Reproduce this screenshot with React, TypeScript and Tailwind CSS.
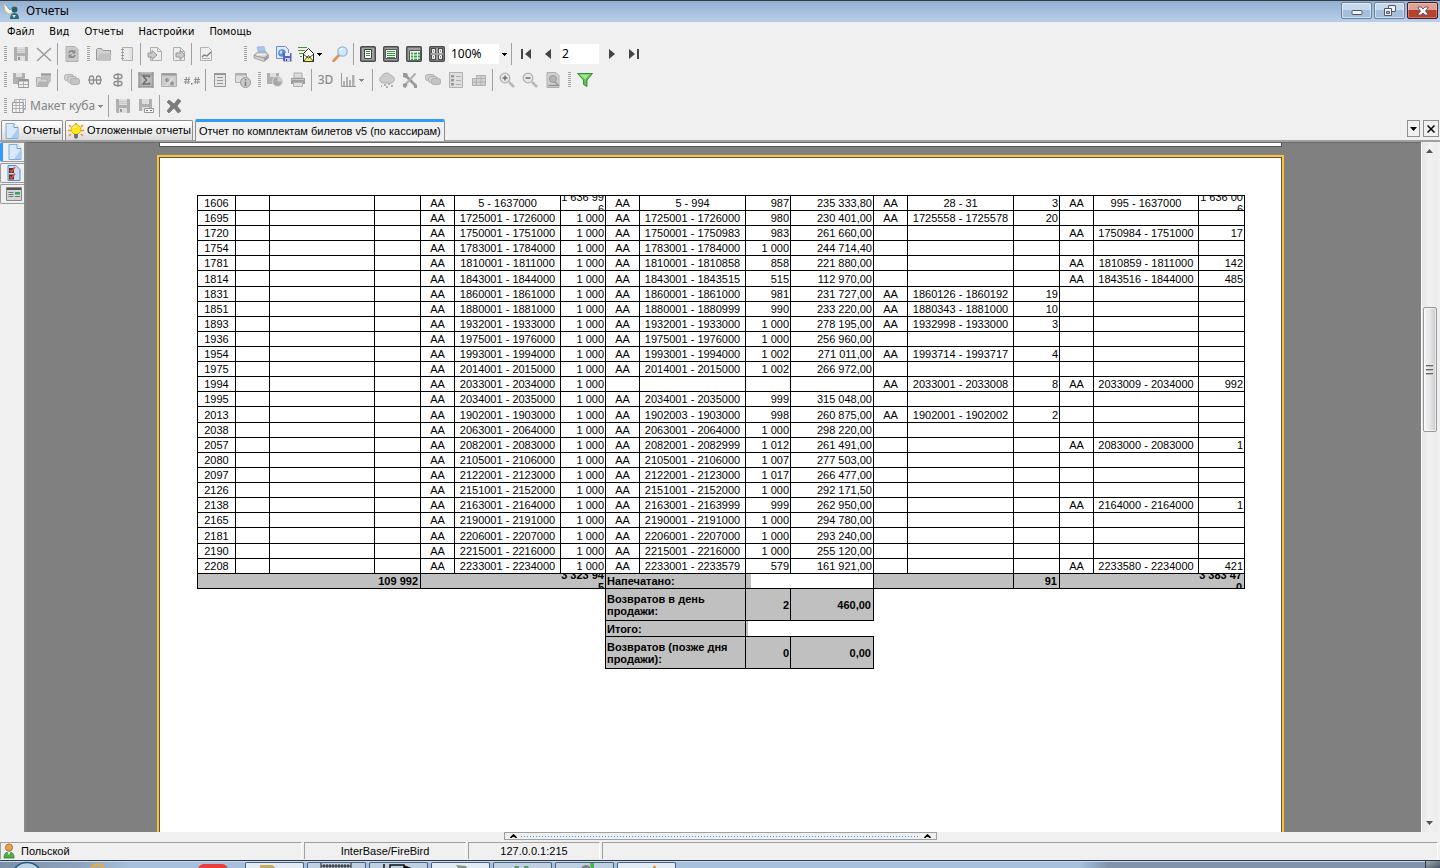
import type { ReactNode } from 'react'

type Row = string[]

// number | series, range, count | series, range, count, sum | series, range, count | series, range, count
const ROWS: Row[] = [
  ['1606', 'AA', '5 - 1637000', '1 636 99|6', 'AA', '5 - 994', '987', '235 333,80', 'AA', '28 - 31', '3', 'AA', '995 - 1637000', '1 636 00|6'],
  ['1695', 'AA', '1725001 - 1726000', '1 000', 'AA', '1725001 - 1726000', '980', '230 401,00', 'AA', '1725558 - 1725578', '20', '', '', ''],
  ['1720', 'AA', '1750001 - 1751000', '1 000', 'AA', '1750001 - 1750983', '983', '261 660,00', '', '', '', 'AA', '1750984 - 1751000', '17'],
  ['1754', 'AA', '1783001 - 1784000', '1 000', 'AA', '1783001 - 1784000', '1 000', '244 714,40', '', '', '', '', '', ''],
  ['1781', 'AA', '1810001 - 1811000', '1 000', 'AA', '1810001 - 1810858', '858', '221 880,00', '', '', '', 'AA', '1810859 - 1811000', '142'],
  ['1814', 'AA', '1843001 - 1844000', '1 000', 'AA', '1843001 - 1843515', '515', '112 970,00', '', '', '', 'AA', '1843516 - 1844000', '485'],
  ['1831', 'AA', '1860001 - 1861000', '1 000', 'AA', '1860001 - 1861000', '981', '231 727,00', 'AA', '1860126 - 1860192', '19', '', '', ''],
  ['1851', 'AA', '1880001 - 1881000', '1 000', 'AA', '1880001 - 1880999', '990', '233 220,00', 'AA', '1880343 - 1881000', '10', '', '', ''],
  ['1893', 'AA', '1932001 - 1933000', '1 000', 'AA', '1932001 - 1933000', '1 000', '278 195,00', 'AA', '1932998 - 1933000', '3', '', '', ''],
  ['1936', 'AA', '1975001 - 1976000', '1 000', 'AA', '1975001 - 1976000', '1 000', '256 960,00', '', '', '', '', '', ''],
  ['1954', 'AA', '1993001 - 1994000', '1 000', 'AA', '1993001 - 1994000', '1 002', '271 011,00', 'AA', '1993714 - 1993717', '4', '', '', ''],
  ['1975', 'AA', '2014001 - 2015000', '1 000', 'AA', '2014001 - 2015000', '1 002', '266 972,00', '', '', '', '', '', ''],
  ['1994', 'AA', '2033001 - 2034000', '1 000', '', '', '', '', 'AA', '2033001 - 2033008', '8', 'AA', '2033009 - 2034000', '992'],
  ['1995', 'AA', '2034001 - 2035000', '1 000', 'AA', '2034001 - 2035000', '999', '315 048,00', '', '', '', '', '', ''],
  ['2013', 'AA', '1902001 - 1903000', '1 000', 'AA', '1902003 - 1903000', '998', '260 875,00', 'AA', '1902001 - 1902002', '2', '', '', ''],
  ['2038', 'AA', '2063001 - 2064000', '1 000', 'AA', '2063001 - 2064000', '1 000', '298 220,00', '', '', '', '', '', ''],
  ['2057', 'AA', '2082001 - 2083000', '1 000', 'AA', '2082001 - 2082999', '1 012', '261 491,00', '', '', '', 'AA', '2083000 - 2083000', '1'],
  ['2080', 'AA', '2105001 - 2106000', '1 000', 'AA', '2105001 - 2106000', '1 007', '277 503,00', '', '', '', '', '', ''],
  ['2097', 'AA', '2122001 - 2123000', '1 000', 'AA', '2122001 - 2123000', '1 017', '266 477,00', '', '', '', '', '', ''],
  ['2126', 'AA', '2151001 - 2152000', '1 000', 'AA', '2151001 - 2152000', '1 000', '292 171,50', '', '', '', '', '', ''],
  ['2138', 'AA', '2163001 - 2164000', '1 000', 'AA', '2163001 - 2163999', '999', '262 950,00', '', '', '', 'AA', '2164000 - 2164000', '1'],
  ['2165', 'AA', '2190001 - 2191000', '1 000', 'AA', '2190001 - 2191000', '1 000', '294 780,00', '', '', '', '', '', ''],
  ['2181', 'AA', '2206001 - 2207000', '1 000', 'AA', '2206001 - 2207000', '1 000', '293 240,00', '', '', '', '', '', ''],
  ['2190', 'AA', '2215001 - 2216000', '1 000', 'AA', '2215001 - 2216000', '1 000', '255 120,00', '', '', '', '', '', ''],
  ['2208', 'AA', '2233001 - 2234000', '1 000', 'AA', '2233001 - 2233579', '579', '161 921,00', '', '', '', 'AA', '2233580 - 2234000', '421'],
]

const COLS = [38, 34, 105, 46, 34, 106, 45, 34, 106, 45, 83, 34, 106, 46, 34, 105, 46]

const TALL = ['1814', '2013', '2181']

const ALIGN = ['c', 'c', 'c', 'r', 'c', 'c', 'r', 'r', 'c', 'c', 'r', 'c', 'c', 'r']

const G = '#b0b0b0'
const L = '#dedede'
const D = '#989898'

function Svg({ children, w = 16 }: { children: ReactNode; w?: number }) {
  return (
    <svg width={w} height={16} viewBox={`0 0 ${w} 16`} fill="none" className="shrink-0" aria-hidden="true">
      {children}
    </svg>
  )
}

/* ---------- toolbar icons ---------- */

const SaveIcon = () => (
  <Svg>
    <path d="M1 1h14v14H2l-1-1z" fill={G} />
    <path d="M4 1h8v6H4z" fill={L} />
    <path d="M4 3.500h8M4 5.500h8" stroke="#c8c8c8" />
    <path d="M4 10h8v5H4z" fill={L} />
    <path d="M5 11h2v3H5z" fill={D} />
  </Svg>
)

const CrossIcon = () => (
  <Svg>
    <path d="M1 2l14 13M15 2L1 15" stroke={D} strokeWidth="1.4" />
  </Svg>
)

const RefreshDocIcon = () => (
  <Svg>
    <path d="M2 .5h9l3 3v12H2z" fill="#cacaca" stroke={G} />
    <path d="M5 7a3.2 3.2 0 0 1 5-1.500M11 9a3.200 3.200 0 0 1-5 1.500" stroke="#8a8a8a" strokeWidth="1.800" />
    <path d="M11.500 3.500v4h-4zM4.500 12.500v-4h4z" fill="#8a8a8a" />
  </Svg>
)

const FolderIcon = () => (
  <Svg>
    <path d="M.5 14V3.500l1-1h4l1.500 2h7.500V14z" fill="#d2d2d2" stroke={D} />
    <path d="M1 14L3 7.500h12.500L14.500 14z" fill="#c2c2c2" />
  </Svg>
)

const BookIcon = () => (
  <Svg>
    <path d="M3.500 1.500h10v13h-10z" fill="#ececec" stroke={G} />
    <path d="M11.500 2v12" stroke={L} strokeWidth="2" />
    <path d="M2 3.500h3M2 6.500h3M2 9.500h3M2 12.500h3" stroke={D} />
  </Svg>
)

const DocArrowIcon = ({ out = false }: { out?: boolean }) => (
  <Svg>
    <path d="M3.500 1.500h7l4 4v9h-11z" fill="#ededed" stroke={G} />
    <path d="M10.500 1.500v4h4" stroke={G} />
    <path d={out ? 'M6 7h4V4.500L15 9l-5 4.500V11H6z' : 'M1 7h4V4.500L10 9l-5 4.500V11H1z'} fill="#cacaca" stroke={D} />
  </Svg>
)

const ChartDocIcon = () => (
  <Svg>
    <path d="M2.500 1.500h8l3 3v10h-11z" fill="#efefef" stroke={G} />
    <path d="M4 11l2-2 3 1 4-4" stroke="#808080" strokeWidth="1.500" />
    <path d="M4 12.500h8" stroke={G} />
  </Svg>
)

const PrinterColorIcon = () => (
  <Svg>
    <path d="M4 1l7-.5 2 7H6z" fill="#a9c5f5" stroke="#8fa8dc" strokeWidth=".6" />
    <path d="M1 9l4-3h8l2.500 3v3L11 15.500 1 12z" fill="#d3d1ce" stroke="#9a9794" strokeWidth=".8" />
    <path d="M1 9.500l10 2.500 4.500-3" stroke="#9a9794" />
    <path d="M4 8h8l1 1.500H3z" fill="#eee" />
    <path d="M11 12.500v2.500l4-3V10z" fill="#9a96a2" />
  </Svg>
)

const WebSaveIcon = () => (
  <Svg>
    <path d="M.5.500h9l3 3v9H.5z" fill="#dfe9fa" stroke="#6f8fce" />
    <circle cx="6" cy="7" r="3.800" fill="#5b87dc" />
    <path d="M4 5c2-1 3 0 2 2S4 8 3.500 7zM7 8l2-1-1 3z" fill="#bfe0c2" />
    <path d="M7 7h8.500v8.500H8l-1-1z" fill="#5563b8" />
    <path d="M9 7h5v3H9z" fill="#e8ecff" />
    <path d="M9 12h5v3.500H9z" fill="#c6cdf0" />
    <path d="M10 13h1v2h-1z" fill="#333b7b" />
  </Svg>
)

const MailIcon = () => (
  <Svg>
    <path d="M0 1.500h9M0 4.500h7M1 7.500h4M2 10.500h2" stroke="#3f9b2f" strokeWidth="1.200" />
    <path d="M5.500 15.500V7.500l5-5 5 5v8z" fill="#fff" stroke="#222" />
    <path d="M5.500 15.500l5-6 5 6z" fill="#f7ef64" stroke="#222" strokeWidth=".8" />
    <path d="M5.500 8.500l5 3.500 5-3.500" stroke="#222" strokeWidth=".8" />
  </Svg>
)

const MagnifierIcon = () => (
  <Svg>
    <path d="M1.500 15l5-5.500" stroke="#d79a5c" strokeWidth="2.800" strokeLinecap="round" />
    <circle cx="10.500" cy="5.500" r="4.700" fill="#cfeafd" stroke="#8fb4da" strokeWidth="1.200" />
    <path d="M8 4.500a3 3 0 0 1 3-2" stroke="#fff" strokeWidth="1.500" />
  </Svg>
)

const PageModeIcon = ({ mode }: { mode: number }) => (
  <Svg>
    <rect x=".75" y=".75" width="14.500" height="14.500" rx="1" fill="#a0a0a0" stroke="#4b4b4b" strokeWidth="1.500" />
    {mode === 0 && (
      <>
        <path d="M4.500 3.500h7v9h-7z" fill="#fff" stroke="#444" />
        <path d="M6 5.500h4M6 7.500h4M6 9.500h4" stroke="#2f9a3b" />
      </>
    )}
    {mode === 1 && (
      <>
        <path d="M2.500 3.500h11v9h-11z" fill="#fff" stroke="#555" />
        <path d="M4 5.500h8M4 7.500h8M4 9.500h8M4 11.500h8" stroke="#2f9a3b" />
      </>
    )}
    {mode === 2 && (
      <>
        <path d="M3.500 4.500h11v10h-11z" fill="#fff" stroke="#555" />
        <path d="M5 7.500h2M8 7.500h3M12 7.500h2M5 10.500h2M8 10.500h3M12 10.500h2M5 13.500h2M8 13.500h3M12 13.500h2" stroke="#3aa346" strokeWidth="2" />
      </>
    )}
    {mode === 3 && (
      <>
        <path d="M2 2h5v5H2zM9 2h5v5H9zM2 9h5v5H2zM9 9h5v5H9z" fill="#4b4b4b" />
        <path d="M3.500 3.500h2v3h-2zM10.500 3.500h2v3h-2zM3.500 9.500h2v3h-2zM10.500 9.500h2v3h-2z" fill="#8c8c8c" stroke="#fff" />
      </>
    )}
  </Svg>
)

const NavIcon = ({ d }: { d: string }) => (
  <Svg>
    <path d={d} fill="#444" />
  </Svg>
)

const SaveGridIcon = () => (
  <Svg>
    <path d="M0 1h12v11H0z" fill={G} />
    <path d="M3 1h6v4H3z" fill={L} />
    <path d="M5.500 7.500h10v8h-10z" fill="#eee" stroke={D} />
    <path d="M5.500 8.500h10" stroke={D} strokeWidth="2" />
    <path d="M6 12.500h9M10.500 9v6" stroke={G} />
  </Svg>
)

const FoldersIcon = () => (
  <Svg>
    <path d="M5 1h10v9H5z" fill="#c0c0c0" />
    <path d="M5 2.500h10" stroke={D} strokeWidth="1.500" />
    <path d="M.5 14.500v-9h4l1 1.500h6v7.500z" fill="#d2d2d2" stroke={G} />
    <path d="M1 14.500l2-5h11l-2.500 5z" fill="#b4b4b4" />
  </Svg>
)

const StackIcon = () => (
  <Svg>
    <rect x=".5" y="2.500" width="9" height="6" rx="2" fill="#d0d0d0" stroke={G} />
    <rect x="3.500" y="4.500" width="9" height="6" rx="2" fill="#d0d0d0" stroke={G} />
    <rect x="6.500" y="6.500" width="9" height="6" rx="2" fill="#c4c4c4" stroke={G} />
  </Svg>
)

const LinksIcon = ({ vertical = false }: { vertical?: boolean }) => (
  <Svg>
    <g transform={vertical ? 'rotate(90 8 8)' : undefined} stroke="#8c8c8c" strokeWidth="1.300">
      <rect x="2.500" y="4" width="4" height="8" rx="2" />
      <rect x="9.500" y="4" width="4" height="8" rx="2" />
      <path d="M1 8h14" />
    </g>
  </Svg>
)

const SigmaIcon = () => (
  <Svg>
    <path d="M0 0h16v16H0z" fill="#bcbcbc" />
    <path d="M0 2.500h16M0 14.500h16M1.500 0v16M14.500 0v16" stroke="#9c9c9c" strokeWidth="1.500" />
    <path d="M11.500 5.500V4H5l3.500 4L5 12h6.500v-1.500" stroke="#6c6c6c" strokeWidth="1.500" />
  </Svg>
)

const PercentGridIcon = () => (
  <Svg>
    <path d="M.5 1.500h15v13H.5z" fill="#cecece" stroke={G} />
    <path d="M1 2.500h14" stroke={D} strokeWidth="2" />
    <circle cx="6" cy="8" r="2" fill={D} />
    <circle cx="11" cy="11.500" r="2" fill={D} />
    <path d="M12 6l-7 8" stroke="#eee" />
  </Svg>
)

const HashIcon = () => (
  <Svg>
    <path d="M2.500 5l-1 7M5 5l-1 7M0 7.500h6M0 10h6M12 5l-1 7M14.500 5l-1 7M10 7.500h6M10 10h6" stroke="#8f8f8f" />
    <path d="M7 11h1.500v1.500H7z" fill="#777" />
  </Svg>
)

const ListIcon = () => (
  <Svg>
    <path d="M2.500 1.500h11v13h-11z" fill="#e6e6e6" stroke={D} />
    <path d="M2.500 2h11" stroke={D} strokeWidth="2" />
    <path d="M5 5.500h6M5 8.500h6M5 11.500h6" stroke={D} />
  </Svg>
)

const InfoIcon = () => (
  <Svg>
    <path d="M.5 1.500h11v9H.5z" fill="#dedede" stroke={G} />
    <path d="M.5 2.500h11" stroke={G} strokeWidth="2" />
    <circle cx="10.500" cy="10.500" r="5" fill="#cacaca" stroke={D} />
    <path d="M10.500 9.500V14M10.500 7v1.500" stroke="#808080" strokeWidth="1.600" />
  </Svg>
)

const SavePieIcon = () => (
  <Svg>
    <path d="M0 1h12v11H0z" fill={G} />
    <path d="M3 1h6v4H3z" fill={L} />
    <circle cx="10.500" cy="9.500" r="5" fill="#a8a8a8" stroke="#dcdcdc" />
    <path d="M10.500 9.500V4.500a5 5 0 0 1 5 5z" fill="#cdcdcd" />
  </Svg>
)

const PrinterIcon = () => (
  <Svg>
    <path d="M4 1h8v5H4z" fill="#ddd" stroke={G} />
    <path d="M1 6h14v6H1z" fill="#a0a0a0" />
    <path d="M2 7.500h12" stroke="#c8c8c8" />
    <path d="M3.500 10.500h9v4h-9z" fill="#e0e0e0" stroke={G} />
  </Svg>
)

const BarsIcon = () => (
  <Svg>
    <path d="M1.500 1v13.500H16" stroke={D} />
    <path d="M3 9h2v5H3zM6 5h2v9H6zM9 8h2v6H9zM12 3h2.500v11H12z" fill={G} />
  </Svg>
)

const WeatherIcon = () => (
  <Svg>
    <path d="M1 9a4 4 0 0 1 2-5 5 5 0 0 1 9-.5A4 4 0 0 1 15 9l-2 2H3z" fill="#cccccc" stroke={G} />
    <path d="M5 12h2v2H5zM9 11h2v2H9zM7 14h2v2H7zM12 13h2v2h-2zM2 13h1v2H2z" fill={G} />
  </Svg>
)

const ToolsIcon = () => (
  <Svg>
    <path d="M3 3l11 11" stroke="#9a9a9a" strokeWidth="2.600" />
    <path d="M13.500 1.500L3 13" stroke="#b0b0b0" strokeWidth="2" />
    <path d="M1 1l4 0 1 3-2 2-3-1zM1 12l3-1 1.500 2-2 3-2.500-1zM12 11l3 2v3h-3z" fill="#9a9a9a" />
  </Svg>
)

const CheckListIcon = () => (
  <Svg>
    <path d="M1.500.500h13v15h-13z" fill="#dedede" stroke={G} />
    <path d="M3 3h3v2.500H3zM3 7h3v2.500H3zM3 11h3v2.500H3z" fill={D} />
    <path d="M8 4.500h5M8 8.500h5M8 12.500h5" stroke={G} />
  </Svg>
)

const SmallGridIcon = () => (
  <Svg>
    <path d="M1.500 6.500h13v7h-13zM5.500 3.500h9v3h-9z" fill="#d2d2d2" />
    <path d="M1.500 6.500h13v7h-13zM5.500 13V3.500h9V7M1.500 10h13M10 3.500v10" stroke={G} />
  </Svg>
)

const ZoomIcon = ({ plus = false }: { plus?: boolean }) => (
  <Svg>
    <circle cx="6" cy="6" r="4.800" fill="#e8e8e8" stroke={G} strokeWidth="1.300" />
    <path d={plus ? 'M3.500 6h5M6 3.500v5' : 'M3.500 6h5'} stroke="#707070" strokeWidth="1.500" />
    <path d="M10 10l5 5" stroke="#b8b8b8" strokeWidth="2.500" />
  </Svg>
)

const PreviewIcon = () => (
  <Svg>
    <path d="M2 .5h9l3 3v12H2z" fill="#d0d0d0" stroke={G} />
    <circle cx="8" cy="7" r="3.500" fill="#b4b4b4" stroke={D} />
    <path d="M10 10l4 4M3 13.500h10" stroke={D} strokeWidth="1.600" />
  </Svg>
)

const FunnelIcon = () => (
  <Svg>
    <path d="M.5 1.500h15L10 8v6.500l-3.500-2V8z" fill="#5cc24f" stroke="#389036" />
    <path d="M2.500 2.500h10L8 7.500z" fill="#a5e68f" />
  </Svg>
)

const CubeIcon = () => (
  <Svg>
    <path d="M3.500 1.500h11v10h-11z" fill="#f4f4f4" stroke={G} />
    <path d="M1.500 4.500h11v10h-11z" fill="#f4f4f4" stroke={D} />
    <path d="M1.500 7.500h13M1.500 10.500h13M5 2v12M8.500 2v12M12 2v12" stroke={G} />
  </Svg>
)

const SaveAsIcon = () => (
  <Svg>
    <path d="M1 1h13v12H1z" fill={G} />
    <path d="M4 1h7v5H4zM4 9h7v4H4z" fill={L} />
    <path d="M6.500 10.500h9v4h-9z" fill="#f5f5f5" stroke={D} />
    <path d="M8 12.500h2M12 12.500h2" stroke="#777" />
  </Svg>
)

const DeleteIcon = () => (
  <Svg>
    <path d="M3 2l5 4 4-5 3 2-4 5 4 5-3 2-4-5-5 5-2-2 4-5-4-4z" fill="#7c7c7c" stroke="#666" strokeWidth=".6" />
  </Svg>
)

const SheetIcon = () => (
  <Svg>
    <path d="M2 .5h8l4 4v11H2z" fill="#d8e9fc" stroke="#83abd9" />
    <path d="M7 15L13.500 6v9z" fill="#a7cbf3" />
    <path d="M10 .5v4h4" fill="#fff" stroke="#6d9cd6" />
  </Svg>
)

const BulbIcon = () => (
  <Svg>
    <path d="M8 0v2M1 2l2 2M15 2l-2 2M0 7.500h3M13 7.500h3M1 13l2-2M15 13l-2-2" stroke="#f0932b" strokeWidth="1.500" />
    <circle cx="8" cy="6.500" r="4.800" fill="#ffe818" stroke="#d9a400" strokeWidth=".8" />
    <path d="M5.500 5a3 3 0 0 1 2.500-2" stroke="#fffbc0" strokeWidth="1.400" />
    <path d="M6 11h4v3.500L8 16l-2-1.500z" fill="#6a6f78" />
  </Svg>
)

const AppIcon = () => (
  <Svg>
    <path d="M1 1l6 3 5-3-2 8-4 2-4-3z" fill="#f7f7ef" stroke="#e0b35a" strokeWidth=".8" />
    <path d="M3 2l4 5 4-5" fill="#7fc0ee" stroke="#5aa1dc" />
    <circle cx="11.500" cy="6.500" r="3" fill="#2f5b68" />
    <path d="M7 16c0-4 1.500-6 4.500-6s4.500 2 4.500 6z" fill="#2d6c74" />
    <path d="M9 12l2 3 2-3z" fill="#bfe3ef" />
  </Svg>
)

const UserIcon = () => (
  <Svg w={12}>
    <circle cx="6" cy="4.500" r="3.600" fill="#f0a04b" stroke="#9b6324" strokeWidth=".8" />
    <path d="M1 15c0-4 1.500-6 5-6s5 2 5 6z" fill="#4fae48" stroke="#2f7d2c" strokeWidth=".8" />
    <path d="M4.500 9L6 12l1.500-3z" fill="#fff" />
  </Svg>
)

/* ---------- toolbar pieces ---------- */

const Grip = ({ className = '' }: { className?: string }) => (
  <div className={`flex w-2 shrink-0 justify-center ${className}`}>
    <div className="h-4 w-[3px] bg-[repeating-linear-gradient(#a0a0a0_0_1px,#f4f4f4_1px_2px)]" />
  </div>
)

const Sep = () => (
  <div className="flex w-[5px] shrink-0 justify-center self-stretch">
    <div className="w-px bg-[#a0a0a0]" />
  </div>
)

function Tool({ label, children, menu = false, dark = false }: { label: string; children: ReactNode; menu?: boolean; dark?: boolean }) {
  return (
    <button type="button" aria-label={label} className={`flex h-[22px] shrink-0 items-center ${menu ? 'w-[33px] gap-[3px] pl-[3px]' : 'w-[23px] justify-center'}`}>
      {children}
      {menu && <Caret color={dark ? '#000' : '#8c8c8c'} />}
    </button>
  )
}

const Caret = ({ color = '#000' }: { color?: string }) => (
  <svg width="5" height="3" viewBox="0 0 5 3" className="shrink-0" aria-hidden="true" shapeRendering="crispEdges">
    <path d="M0 0h5v1H4v1H3v1H2V2H1V1H0z" fill={color} />
  </svg>
)

function TitleBar() {
  return (
    <header className="flex h-[22px] shrink-0 items-start border-t border-[#353a42] bg-linear-to-b from-[#93b0d2] to-[#b9d0ea] pl-[3px] pr-[2px]">
      <div className="flex h-[19px] grow items-center gap-[7px]">
        <AppIcon />
        <h1 className="font-['Noto_Sans'] text-xs leading-4">Отчеты</h1>
      </div>
      <div className="flex gap-[2px] pt-px">
        <button type="button" aria-label="Свернуть" className="flex h-[17px] w-[31px] items-center justify-center rounded-[2px] border border-[#6b829f] bg-linear-to-b from-[#c5d9ee] from-50% to-[#a4bfdd] to-50% inset-ring inset-ring-white/50">
          <svg width="12" height="8" viewBox="0 0 12 8" aria-hidden="true">
            <rect x="1" y="3.500" width="10" height="4" rx="1" fill="#f4f4f4" stroke="#535666" />
          </svg>
        </button>
        <button type="button" aria-label="Восстановить" className="flex h-[17px] w-[31px] items-center justify-center rounded-[2px] border border-[#6b829f] bg-linear-to-b from-[#c5d9ee] from-50% to-[#a4bfdd] to-50% inset-ring inset-ring-white/50">
          <svg width="12" height="11" viewBox="0 0 12 11" aria-hidden="true">
            <path d="M4.500.500h7v6h-7z" fill="#f4f4f4" stroke="#535666" />
            <path d="M.5 3.500h7v7h-7z" fill="#f4f4f4" stroke="#535666" />
            <path d="M2.500 6.500h3v2h-3z" fill="#b4cbe4" stroke="#535666" />
          </svg>
        </button>
        <button type="button" aria-label="Закрыть" className="flex h-[17px] w-[31px] items-center justify-center rounded-[2px] border border-[#4a1a22] bg-linear-to-b from-[#dfa095] from-50% to-[#b9402c] to-50% inset-ring inset-ring-white/30">
          <svg width="12" height="10" viewBox="0 0 12 10" aria-hidden="true">
            <path d="M1 1h3l2 2 2-2h3v1L8.500 5 11 8v1H8L6 7 4 9H1V8l2.500-3L1 2z" fill="#f6f6f6" stroke="#535666" strokeWidth=".9" />
          </svg>
        </button>
      </div>
    </header>
  )
}

function MenuBar() {
  return (
    <nav className="flex h-[21px] shrink-0 items-center gap-[15px] pl-[7px] font-['DejaVu_Sans_Condensed','DejaVu_Sans',sans-serif] text-[11px]">
      {['Файл', 'Вид', 'Отчеты', 'Настройки', 'Помощь'].map((m) => (
        <button type="button" key={m}>{m}</button>
      ))}
    </nav>
  )
}

function Toolbars() {
  return (
    <div className="flex shrink-0 flex-col gap-[4px]">
      <div className="flex h-[22px] items-center pl-px">
        <Grip />
        <Tool label="Сохранить"><SaveIcon /></Tool>
        <Tool label="Удалить"><CrossIcon /></Tool>
        <Sep />
        <Tool label="Обновить"><RefreshDocIcon /></Tool>
        <Grip className="ml-px" />
        <Tool label="Открыть"><FolderIcon /></Tool>
        <Tool label="Журнал"><BookIcon /></Tool>
        <Sep />
        <Tool label="Импорт"><DocArrowIcon /></Tool>
        <Tool label="Экспорт"><DocArrowIcon out /></Tool>
        <Sep />
        <Tool label="График"><ChartDocIcon /></Tool>
        <Grip className="ml-6" />
        <Tool label="Печать"><PrinterColorIcon /></Tool>
        <Tool label="Сохранить как веб-страницу"><WebSaveIcon /></Tool>
        <Tool label="Отправить" menu dark><MailIcon /></Tool>
        <Tool label="Найти"><MagnifierIcon /></Tool>
        <Sep />
        <Tool label="Страница целиком"><PageModeIcon mode={0} /></Tool>
        <Tool label="По ширине"><PageModeIcon mode={1} /></Tool>
        <Tool label="Реальный размер"><PageModeIcon mode={2} /></Tool>
        <Tool label="Несколько страниц"><PageModeIcon mode={3} /></Tool>
        <div className="relative ml-px flex h-[20px] w-[60px] bg-white">
          <select aria-label="Масштаб" defaultValue="100%" className="h-5 w-full appearance-none pl-[2px] font-['Noto_Sans'] text-xs leading-5 outline-none">
            <option>100%</option>
          </select>
          <div className="pointer-events-none absolute inset-y-0 right-0 flex w-[10px] items-center justify-center bg-[#f0f0f0]">
            <Caret />
          </div>
        </div>
        <Sep />
        <Tool label="Первая"><NavIcon d="M3 3h2v10H3zM13 3v10L7 8z" /></Tool>
        <Tool label="Предыдущая"><NavIcon d="M10 3v10L4 8z" /></Tool>
        <input aria-label="Номер страницы" defaultValue="2" className="h-[20px] w-[39px] bg-white pl-[2px] font-['Noto_Sans'] text-xs leading-5 outline-none" />
        <Tool label="Следующая"><NavIcon d="M6 3v10l6-5z" /></Tool>
        <Tool label="Последняя"><NavIcon d="M11 3h2v10h-2zM3 3v10l6-5z" /></Tool>
      </div>

      <div className="flex h-[22px] items-center pl-px">
        <Grip />
        <Tool label="Сохранить таблицу"><SaveGridIcon /></Tool>
        <Tool label="Открыть таблицу"><FoldersIcon /></Tool>
        <Sep />
        <Tool label="Слои"><StackIcon /></Tool>
        <Tool label="Связать по горизонтали"><LinksIcon /></Tool>
        <Tool label="Связать по вертикали"><LinksIcon vertical /></Tool>
        <Sep />
        <Tool label="Сумма"><SigmaIcon /></Tool>
        <Tool label="Проценты"><PercentGridIcon /></Tool>
        <Tool label="Формат"><HashIcon /></Tool>
        <Sep />
        <Tool label="Список"><ListIcon /></Tool>
        <Tool label="Сведения"><InfoIcon /></Tool>
        <Grip className="ml-px" />
        <Tool label="Сохранить диаграмму"><SavePieIcon /></Tool>
        <Tool label="Печать диаграммы"><PrinterIcon /></Tool>
        <Sep />
        <button type="button" className="h-[22px] w-[23px] shrink-0 font-['Noto_Sans'] text-xs font-medium text-[#8c8c8c]">3D</button>
        <Tool label="Тип диаграммы" menu><BarsIcon /></Tool>
        <Sep />
        <Tool label="Фон"><WeatherIcon /></Tool>
        <Tool label="Настройка"><ToolsIcon /></Tool>
        <Tool label="Серии"><StackIcon /></Tool>
        <Tool label="Легенда"><CheckListIcon /></Tool>
        <Tool label="Сетка"><SmallGridIcon /></Tool>
        <Sep />
        <Tool label="Увеличить"><ZoomIcon plus /></Tool>
        <Tool label="Уменьшить"><ZoomIcon /></Tool>
        <Tool label="Просмотр"><PreviewIcon /></Tool>
        <Grip className="ml-px" />
        <Tool label="Фильтр"><FunnelIcon /></Tool>
      </div>

      <div className="flex h-[22px] items-center pl-px">
        <Grip />
        <button type="button" className="flex h-[22px] items-center gap-[3px] pl-[2px] font-['Noto_Sans'] text-xs text-[#838383]">
          <CubeIcon />
          <span>Макет куба</span>
          <Caret color="#8c8c8c" />
        </button>
        <div className="ml-[3px] self-stretch flex">
          <Sep />
        </div>
        <Tool label="Сохранить макет"><SaveIcon /></Tool>
        <Tool label="Сохранить макет как"><SaveAsIcon /></Tool>
        <Sep />
        <Tool label="Удалить макет"><DeleteIcon /></Tool>
      </div>
    </div>
  )
}

function TabStrip() {
  const tab = 'flex h-5 items-center rounded-t-[2px] border border-b-0 border-[#8e8e8e] whitespace-nowrap'
  return (
    <div className="flex h-[25px] shrink-0 items-end border-b-2 border-[#a0a0a0] pl-px pr-px font-['Liberation_Sans',Arial,sans-serif] text-[11px]">
      <div className="flex grow items-end gap-[2px]" role="tablist">
        <button type="button" role="tab" className={`${tab} gap-[3px] bg-linear-to-b from-white to-[#dcdcdc] pl-[2px] pr-px`}>
          <SheetIcon />
          Отчеты
        </button>
        <button type="button" role="tab" className={`${tab} gap-[3px] bg-linear-to-b from-white to-[#dcdcdc] pl-[2px] pr-px`}>
          <BulbIcon />
          Отложенные отчеты
        </button>
        <button type="button" role="tab" aria-selected="true" className={`${tab} -mb-px h-[22px] border-t-3 border-t-[#3399ff] bg-[#f0f0f0] px-[3px]`}>
          Отчет по комплектам билетов v5 (по кассирам)
        </button>
      </div>
      <div className="flex gap-[3px] pb-[3px]">
        <button type="button" aria-label="Список вкладок" className="flex h-[17px] w-[13px] items-center justify-center border border-[#8e8e8e]">
          <svg width="7" height="4" viewBox="0 0 7 4" aria-hidden="true">
            <path d="M0 0h7L3.500 4z" fill="#000" />
          </svg>
        </button>
        <button type="button" aria-label="Закрыть вкладку" className="flex h-[17px] w-4 items-center justify-center border border-[#8e8e8e]">
          <svg width="8" height="8" viewBox="0 0 8 8" aria-hidden="true">
            <path d="M.5.500l7 7M7.500.500l-7 7" stroke="#000" strokeWidth="1.500" />
          </svg>
        </button>
      </div>
    </div>
  )
}

function SideTabs() {
  const tab = 'flex h-5 w-6 items-center justify-center rounded-l-[2px] border border-r-0 border-[#9a9a9a] pl-[2px]'
  return (
    <div className="flex w-[26px] shrink-0 flex-col gap-px border-r-2 border-[#8a8a8a] bg-[#f0f0f0]">
      <button type="button" aria-label="Отчет" className={`${tab} border-l-3 border-l-[#3399ff] pl-0`}>
        <SheetIcon />
      </button>
      <button type="button" aria-label="Параметры" className={tab}>
        <Svg>
          <path d="M2 .5h8l4 4v11H2z" fill="#c8ddf6" stroke="#5f8ac4" />
          <path d="M3 3h5v5H3zM3 9.500h5v5H3z" fill="#4a3038" />
          <path d="M4 5l1.500 2L9 2M4 11.500l1.500 2L9 8.500" stroke="#e8502c" strokeWidth="1.500" />
        </Svg>
      </button>
      <button type="button" aria-label="Таблица" className={tab}>
        <Svg>
          <path d="M.5 1.500h15v13H.5z" fill="#d4d4d4" stroke="#888" />
          <path d="M1 3h14" stroke="#555" strokeWidth="2" />
          <path d="M2.500 6.500h5M2.500 8.500h5M2.500 10.500h5M9 10.500h5" stroke="#777" />
          <path d="M9 6h5v2.500H9z" fill="#2fa84f" />
        </Svg>
      </button>
    </div>
  )
}

const CELL = 'border border-black p-0'

// numbers that do not fit wrap by one digit and are cut off by the row
function Clipped({ text }: { text: string }) {
  return (
    <div className="flex h-[14px] items-center justify-end overflow-hidden leading-[12px] whitespace-nowrap">
      <span>
        {text.split('|')[0]}
        <br />
        {text.split('|')[1]}
      </span>
    </div>
  )
}

function ReportTable() {
  return (
    <table className="w-[1048px] table-fixed border-collapse font-['Liberation_Sans',Arial,sans-serif] text-[11px] leading-[14px] text-black">
      <colgroup>
        {COLS.map((w, i) => (
          <col key={i} style={{ width: w }} />
        ))}
      </colgroup>
      <tbody>
        {ROWS.map((row) => (
          <tr key={row[0]} className={TALL.includes(row[0]) ? 'h-4' : 'h-[15px]'}>
            <td className={`${CELL} text-center`}>{row[0]}</td>
            <td className={CELL} />
            <td className={CELL} />
            <td className={CELL} />
            {row.slice(1).map((v, i) => (
              <td key={i} className={`${CELL} ${ALIGN[i + 1] === 'c' ? 'text-center' : 'pr-px text-right'}`}>
                {v.includes('|') ? <Clipped text={v} /> : v}
              </td>
            ))}
          </tr>
        ))}
      </tbody>
      <tfoot className="font-bold">
        <tr className="h-[15px]">
          <td colSpan={4} className={`${CELL} bg-[#c0c0c0] pr-[2px] text-right`}>109 992</td>
          <td colSpan={3} className={`${CELL} bg-[#c0c0c0] pr-px text-right`}><Clipped text="3 323 94|5" /></td>
          <th colSpan={2} scope="row" className={`${CELL} bg-[#c0c0c0] pl-px text-left`}>Напечатано:</th>
          <td colSpan={2} className={`${CELL} bg-[#c0c0c0]`}><div className="ml-[5px] h-[14px] bg-white" /></td>
          <td colSpan={2} className={`${CELL} bg-[#c0c0c0]`} />
          <td className={`${CELL} bg-[#c0c0c0] pr-[2px] text-right`}>91</td>
          <td colSpan={3} className={`${CELL} bg-[#c0c0c0] pr-[2px] text-right`}><Clipped text="3 383 47|0" /></td>
        </tr>
        <tr className="h-8 leading-[12px]">
          <td colSpan={7} />
          <th colSpan={2} scope="row" className={`${CELL} bg-[#c0c0c0] pl-px text-left`}>Возвратов в день<br />продажи:</th>
          <td className={`${CELL} bg-[#c0c0c0] pr-px text-right`}>2</td>
          <td className={`${CELL} bg-[#c0c0c0] pr-[2px] text-right`}>460,00</td>
        </tr>
        <tr className="h-4">
          <td colSpan={7} />
          <th colSpan={2} scope="row" className={`${CELL} bg-[#c0c0c0] pl-px text-left`}>Итого:</th>
          <td colSpan={2} className="border-y border-l border-black bg-[#c0c0c0] p-0"><div className="ml-[2px] h-[15px] bg-white" /></td>
        </tr>
        <tr className="h-8 leading-[12px]">
          <td colSpan={7} />
          <th colSpan={2} scope="row" className={`${CELL} bg-[#c0c0c0] pl-px text-left`}>Возвратов (позже дня<br />продажи):</th>
          <td className={`${CELL} bg-[#c0c0c0] pr-px text-right`}>0</td>
          <td className={`${CELL} bg-[#c0c0c0] pr-[2px] text-right`}>0,00</td>
        </tr>
      </tfoot>
    </table>
  )
}

function ScrollBar() {
  return (
    <div className="flex w-4 shrink-0 flex-col items-center border-l border-white bg-linear-to-r from-[#e6e6e6] via-[#f1f1f1] to-[#ececec]">
      <div className="flex h-[18px] items-center">
        <svg width="7" height="4" viewBox="0 0 7 4" aria-hidden="true"><path d="M3.500 0L7 4H0z" fill="#555" /></svg>
      </div>
      <div className="grow-[147]" />
      <div className="flex h-[125px] w-[14px] flex-col items-center justify-center gap-[2px] rounded-[2px] border border-[#979797] bg-linear-to-r from-[#f6f6f6] via-[#e6e6e8] to-[#cbcbcf] inset-ring inset-ring-white/60">
        {[0, 1, 2].map((i) => (
          <div key={i} className="h-[2px] w-[7px] border-b border-[#bbb] bg-[#666]" />
        ))}
      </div>
      <div className="grow-[381]" />
      <div className="flex h-[18px] items-center">
        <svg width="7" height="4" viewBox="0 0 7 4" aria-hidden="true"><path d="M3.500 4L7 0H0z" fill="#555" /></svg>
      </div>
    </div>
  )
}

function StatusBar() {
  const panel = 'flex h-[17px] items-center border-t border-l border-r border-[#a0a0a0] border-r-white'
  return (
    <footer className="flex h-[18px] shrink-0 gap-[2px] pr-[2px] font-['Liberation_Sans',Arial,sans-serif] text-[11px]">
      <div className={`${panel} w-[302px] gap-[6px] pl-[2px]`}>
        <UserIcon />
        Польской
      </div>
      <div className={`${panel} w-[162px] justify-center`}>InterBase/FireBird</div>
      <div className={`${panel} w-[132px] justify-center`}>127.0.0.1:215</div>
      <div className={`${panel} grow`} />
    </footer>
  )
}

const TASKS = [
  <path key="0" d="M14 4h12l3 2v3H14z" fill="#c9ab62" />,
  <path key="1" d="M13 2v7M43 2v7M13 5h30M16 3v4M19 3v4M22 3v4M25 3v4M28 3v4M31 3v4M34 3v4M37 3v4M40 3v4" stroke="#222" />,
  <path key="2" d="M14 3v5h6V4h14v5M34 5l8 3" stroke="#111" strokeWidth="1.500" fill="none" />,
  <path key="3" d="M24 4l10 1 2 4H27z" fill="#899491" />,
  <path key="4" d="M19 9l2-4h4v4zM30 9V5h4l2 4z" fill="#58a05c" />,
  <g key="5"><circle cx="30" cy="9" r="5" fill="#7f8584" /><path d="M34 2h4v7h-3z" fill="#45b748" /></g>,
  <path key="6" d="M34 9l2-5 2 2v3z" fill="#f08b1d" />,
]

function TaskBar() {
  return (
    <div className="flex h-2 shrink-0 items-stretch overflow-hidden border-t border-[#2e3a48] bg-[linear-gradient(90deg,#7c8fa8_0,#8da3bd_80px,#a6c0dd_130px,#a6c0dd_75%,#8093ab_77%,#8093ab_100%)]">
      <svg width="245" height="7" viewBox="0 0 245 7" className="shrink-0" aria-hidden="true">
        <path d="M0 .5h245" stroke="#c9dbee" />
        <circle cx="27" cy="17" r="15.500" fill="#b9d4e6" stroke="#28577d" strokeWidth="1.500" />
        <path d="M90 7c3-5 10-6 13-3l2 3h-3c-2-3-6-2-9 0z" fill="#e0ad48" />
        <rect x="198" y="3" width="30" height="12" rx="6" fill="#ee3b3b" />
      </svg>
      <div className="flex grow gap-[3px] border-t border-[#c9dbee]">
        {TASKS.map((icon, i) => (
          <button type="button" key={i} aria-label={`Окно ${i + 1}`} className={`w-[59px] rounded-t-[2px] border border-b-0 border-[#4c5f78] ${i % 3 === 0 ? 'bg-[#e3ebf4]' : 'bg-[#bfd0e3]'}`}>
            <svg width="57" height="6" viewBox="0 2 57 6" aria-hidden="true">{icon}</svg>
          </button>
        ))}
      </div>
      <button type="button" aria-label="Показать рабочий стол" className="w-[15px] border-l border-[#2e3a48] bg-linear-to-br from-[#a5aeb9] to-[#4a5563]" />
    </div>
  )
}

export default function App() {
  return (
    <div className="flex h-screen flex-col overflow-hidden bg-[#f0f0f0] text-black">
      <TitleBar />
      <MenuBar />
      <Toolbars />
      <TabStrip />
      <div className="flex min-h-0 grow pr-[3px]">
        <SideTabs />
        <main className="flex min-w-0 grow flex-col items-center overflow-hidden border-t border-[#696969] bg-[#808080] pr-[6px]">
          <div className="h-1 w-[1123px] shrink-0 border-r border-b border-l border-[#555] bg-white" />
          <div className="mt-2 w-[1127px] grow border-2 border-b-0 border-[#ffc332]">
            <div className="h-full border border-b-0 border-[#555] bg-white px-[37px] pt-[37px]">
              <ReportTable />
            </div>
          </div>
        </main>
        <ScrollBar />
      </div>
      <div className="flex h-[10px] shrink-0 justify-center">
        <button type="button" aria-label="Показать панель" className="flex h-2 w-[433px] items-center gap-1 border border-[#a0a0a0] px-[5px]">
          <svg width="7" height="4" viewBox="0 0 7 4" aria-hidden="true"><path d="M.5 4l3-3 3 3" stroke="#000" strokeWidth="1.600" fill="none" /></svg>
          <span className="h-px grow bg-[repeating-linear-gradient(90deg,#3399ff_0_1px,transparent_1px_3px)]" />
          <svg width="7" height="4" viewBox="0 0 7 4" aria-hidden="true"><path d="M.5 4l3-3 3 3" stroke="#000" strokeWidth="1.600" fill="none" /></svg>
        </button>
      </div>
      <StatusBar />
      <TaskBar />
    </div>
  )
}
